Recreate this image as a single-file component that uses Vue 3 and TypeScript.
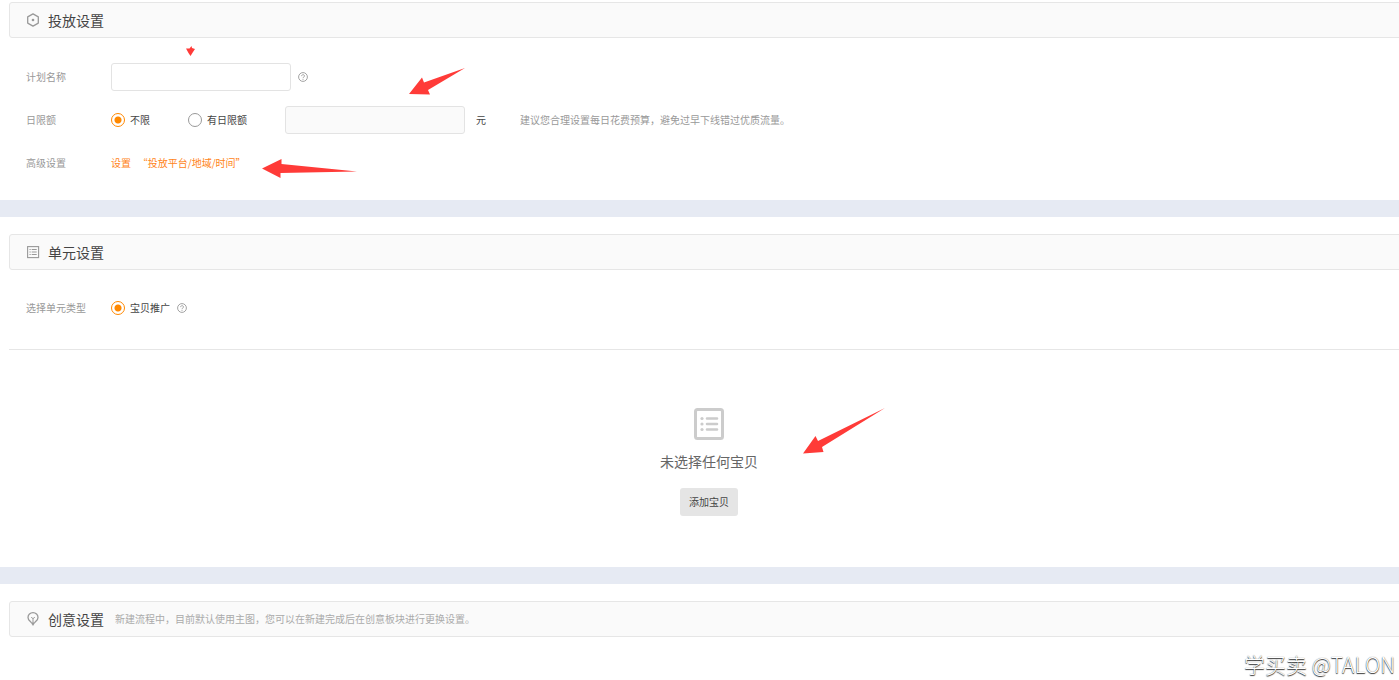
<script setup lang="ts">
import { ref } from 'vue'

const planName = ref('')
const limitType = ref<'none' | 'daily'>('none')
const budget = ref('')
const unitType = ref('item')
</script>

<template>
  <main class="page">
    <section class="section">
      <header class="bar">
        <svg class="bar-icon" viewBox="0 0 14 14" aria-hidden="true">
          <path d="M7 .9 12.3 3.9V10.1L7 13.1 1.7 10.1V3.9Z" fill="none" stroke="#999" stroke-width="1.3" stroke-linejoin="round" />
          <circle cx="7" cy="7" r="1.3" fill="#999" />
        </svg>
        <h2>投放设置</h2>
      </header>
      <div class="form">
        <div class="row">
          <label class="name" for="plan">计划名称</label>
          <input id="plan" v-model="planName" class="box" type="text" />
          <button class="help" type="button" aria-label="计划名称">
            <svg viewBox="0 0 10 10"><circle cx="5" cy="5" r="4.4" /><path d="M3.6 4.1C3.6 2.2 6.5 2.2 6.5 4 6.5 5 5 5 5 6.1M5 6.9V7.8" /></svg>
          </button>
        </div>
        <div class="row">
          <span id="limit" class="name">日限额</span>
          <div class="choices" role="radiogroup" aria-labelledby="limit">
            <label class="radio"><input v-model="limitType" type="radio" name="limit" value="none" />不限</label>
            <label class="radio"><input v-model="limitType" type="radio" name="limit" value="daily" />有日限额</label>
          </div>
          <input id="budget" v-model="budget" class="box" type="text" :disabled="limitType === 'none'" />
          <label class="unit" for="budget">元</label>
          <span class="tip">建议您合理设置每日花费预算，避免过早下线错过优质流量。</span>
        </div>
        <div class="row">
          <span class="name">高级设置</span>
          <a class="link" href="#advanced">设置&nbsp;&nbsp; “投放平台/地域/时间”</a>
        </div>
      </div>
    </section>

    <section class="section">
      <header class="bar">
        <svg class="bar-icon" viewBox="0 0 14 14" aria-hidden="true">
          <rect x="1.6" y="1.6" width="11" height="11" fill="none" stroke="#999" stroke-width="1.1" />
          <path d="M3.5 4.5h1.2M3.5 7h1.2M3.5 9.5h1.2M5.7 4.5h5M5.7 7h5M5.7 9.5h5" stroke="#999" stroke-width="1.1" />
        </svg>
        <h2>单元设置</h2>
      </header>
      <div class="type-row">
        <span id="unit-type" class="name">选择单元类型</span>
        <div role="radiogroup" aria-labelledby="unit-type">
          <label class="radio"><input v-model="unitType" type="radio" name="unit" value="item" />宝贝推广</label>
        </div>
        <button class="help" type="button" aria-label="宝贝推广">
          <svg viewBox="0 0 10 10"><circle cx="5" cy="5" r="4.4" /><path d="M3.6 4.1C3.6 2.2 6.5 2.2 6.5 4 6.5 5 5 5 5 6.1M5 6.9V7.8" /></svg>
        </button>
      </div>
      <div class="empty">
        <svg class="empty-icon" viewBox="0 0 30 32" aria-hidden="true">
          <rect x="1.5" y="1.5" width="27" height="29" rx="2" fill="none" stroke="#ccc" stroke-width="3" />
          <path d="M13 10.5h10M13 16h10M13 21.5h10" stroke="#ccc" stroke-width="2.6" stroke-linecap="round" />
          <g fill="#ccc"><circle cx="8" cy="10.5" r="1.6" /><circle cx="8" cy="16" r="1.6" /><circle cx="8" cy="21.5" r="1.6" /></g>
        </svg>
        <p>未选择任何宝贝</p>
        <button class="add" type="button">添加宝贝</button>
      </div>
    </section>

    <section class="section last">
      <header class="bar">
        <svg class="bar-icon" viewBox="0 0 14 14" aria-hidden="true">
          <path d="M5.300 10.600C4.800 9.200 2 8.400 2 5.400A5 4.700 0 0 1 12 5.400C12 8.400 9.200 9.200 8.700 10.600" fill="none" stroke="#999" stroke-width="1.300" />
          <path d="M7 6.500V10M5.200 5.300 7 6.600 8.800 5.300" fill="none" stroke="#999" stroke-width="1" />
          <path d="M4.600 10.300h4.800L7 13.900Z" fill="#999" />
        </svg>
        <h2>创意设置</h2>
        <span class="note">新建流程中，目前默认使用主图，您可以在新建完成后在创意板块进行更换设置。</span>
      </header>
      <p class="mark">学买卖 @TALON</p>
    </section>

    <svg class="arrow arrow-name" viewBox="0 0 10 12" aria-hidden="true"><path d="M0 3.500 3.500 3.500 5.500 1 6 3 9 4 7 7 4.500 11 2.500 8Z" /></svg>
    <svg class="arrow arrow-budget" viewBox="0 0 56 27" aria-hidden="true"><path d="M0 26 13 9.500 15 14.500 56 0 19 22 21 26.500Z" /></svg>
    <svg class="arrow arrow-link" viewBox="0 0 95 19" aria-hidden="true"><path d="M0 9.500 19.500 0V5L95 12.500 18.500 14V19Z" /></svg>
    <svg class="arrow arrow-add" viewBox="0 0 82 46" aria-hidden="true"><path d="M0 45.500 12.500 28 15 33 82 0 19 39 20.500 44Z" /></svg>
  </main>
</template>

<style>
body {
  margin: 0;
  background: #fff;
}
</style>

<style scoped>
.page {
  position: relative;
  overflow: hidden;
  color: #444;
  font: 10px/16px "Noto Sans CJK SC", "Liberation Sans", sans-serif;
}
.section {
  padding: 17px 0 0 9px;
  border-bottom: 17px solid #e6eaf3;
}
.section:first-child {
  padding-top: 2px;
}
.section.last {
  border-bottom: 0;
}
.bar {
  display: flex;
  align-items: center;
  box-sizing: border-box;
  height: 36px;
  margin-right: -10px;
  padding-left: 16px;
  background: #fafafa;
  border: 1px solid #e6e6e6;
  border-radius: 3px;
}
.bar-icon {
  width: 14px;
  height: 14px;
  margin-right: 8px;
}
h2 {
  margin: 0;
  font-size: 14px;
  font-weight: 400;
  line-height: 20px;
}
.note {
  margin-left: 11px;
  color: #aaa;
}
.form {
  display: grid;
  gap: 15px;
  padding: 25px 0 23px 17px;
}
.row,
.type-row {
  display: flex;
  align-items: center;
  min-height: 28px;
}
.name {
  width: 85px;
  color: #999;
}
.box {
  box-sizing: border-box;
  width: 180px;
  height: 28px;
  margin: 0;
  padding: 0 8px;
  border: 1px solid #e3e3e3;
  border-radius: 3px;
  background: #fff;
  font: inherit;
}
.box:disabled {
  background: #fafafa;
}
.help {
  display: flex;
  margin: 0 0 0 7px;
  padding: 0;
  border: 0;
  background: none;
}
.help svg {
  width: 10px;
  height: 10px;
  fill: none;
  stroke: #999;
  stroke-width: 0.9;
}
.choices {
  display: flex;
  gap: 38px;
  margin-right: 38px;
}
.radio {
  display: flex;
  align-items: center;
  gap: 5px;
}
.radio input {
  appearance: none;
  box-sizing: border-box;
  width: 14px;
  height: 14px;
  margin: 0;
  border: 1px solid #999;
  border-radius: 50%;
  background: #fff;
}
.radio input:checked {
  border-color: #ff8800;
  background: radial-gradient(circle, #ff8800 3px, #fff 4px);
}
.unit {
  margin-left: 11px;
}
.tip {
  margin-left: 34px;
  color: #999;
}
.link {
  color: #ff8419;
  text-decoration: none;
}
.type-row {
  padding: 24px 0 27px 17px;
}
.empty {
  display: flex;
  flex-direction: column;
  align-items: center;
  margin-right: -10px;
  padding: 58px 0 51px;
  border-top: 1px solid #e6e6e6;
}
.empty-icon {
  width: 30px;
  height: 32px;
}
.empty p {
  margin: 11px 0 17px;
  color: #666;
  font-size: 14px;
  line-height: 20px;
}
.add {
  height: 28px;
  padding: 0 9px;
  border: 0;
  border-radius: 3px;
  background: #e5e5e5;
  color: #444;
  font: inherit;
}
.mark {
  margin: 12px 4px 0 0;
  color: #fff;
  font-size: 21px;
  font-weight: 300;
  line-height: 30px;
  text-align: right;
  text-shadow: 0 1px 1px #333, 0 0 1px #666;
}
.arrow {
  position: absolute;
  fill: #ff3b38;
}
.arrow-name {
  top: 45px;
  left: 186px;
  width: 10px;
}
.arrow-budget {
  top: 68px;
  left: 409px;
  width: 56px;
}
.arrow-link {
  top: 159px;
  left: 262px;
  width: 95px;
}
.arrow-add {
  top: 408px;
  left: 803px;
  width: 82px;
}
</style>
